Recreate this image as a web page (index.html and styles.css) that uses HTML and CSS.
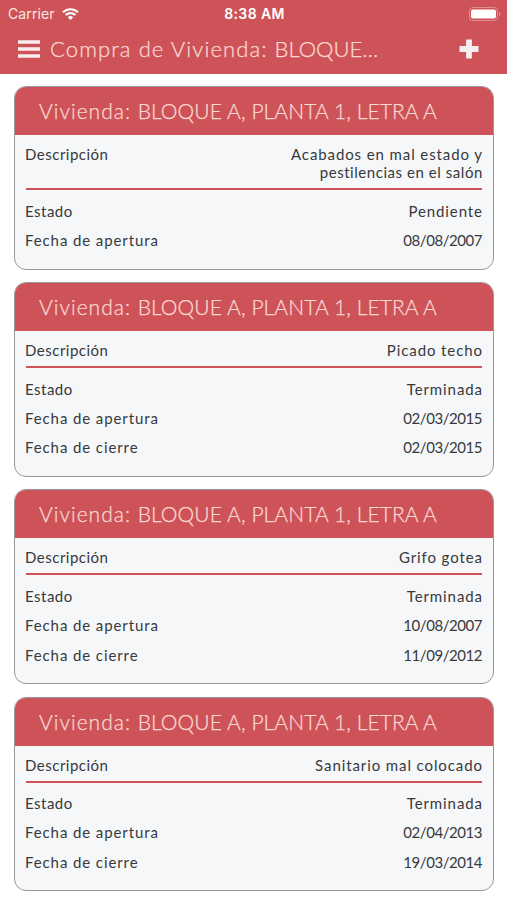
FILE: index.html
```
<!DOCTYPE html>
<html lang="es">
<head>
    <meta charset="UTF-8">
    <meta name="viewport" content="width=device-width, initial-scale=1.0">
    <title>Compra de Vivienda</title>
    <link rel="stylesheet" href="styles.css">
</head>
<body>
    <header class="top">
        <div class="status">
            <div class="carrier">
                <span>Carrier</span>
                <svg class="wifi" viewBox="0 0 17 12" width="17" height="12">
                    <path d="M1 4.3a10.8 10.8 0 0 1 15 0" fill="none" stroke="#fff" stroke-width="2.2"/>
                    <path d="M3.6 7.1a7 7 0 0 1 9.8 0" fill="none" stroke="#fff" stroke-width="2.1"/>
                    <path d="M5.8 9.2a3.9 3.9 0 0 1 5.4 0L8.5 12z" fill="#fff"/>
                </svg>
            </div>
            <span class="time">8:38 AM</span>
            <svg class="battery" viewBox="0 0 32 14" width="32" height="14">
                <rect x="0.5" y="0.5" width="28" height="13" rx="3.5" fill="none" stroke="#e08d91"/>
                <rect x="2" y="2.5" width="25" height="9" rx="2" fill="#fff"/>
                <path d="M30 5v4c1-.4 1.500-1.100 1.500-2S31 5.400 30 5z" fill="#e08d91"/>
            </svg>
        </div>
        <div class="navbar">
            <svg class="menu" viewBox="0 0 22 18" width="22" height="18">
                <path d="M0 2h22M0 9h22M0 16h22" stroke="#f7eeee" stroke-width="3.600"/>
            </svg>
            <h1>Compra de Vivienda: <span class="code">BLOQUE…</span></h1>
            <svg class="add" viewBox="0 0 20 20" width="20" height="20">
                <path d="M10 .5v19M.5 10h19" stroke="#f3eeef" stroke-width="5.800"/>
            </svg>
        </div>
    </header>
    <main class="list">
        <section class="card">
            <h2>Vivienda: <span class="code">BLOQUE A, PLANTA 1, LETRA A</span></h2>
            <div class="card-body">
                <div class="row desc"><span>Descripción</span><span class="value">Acabados en mal estado y<br><span class="tight">pestilencias en el salón</span></span></div>
                <div class="row"><span>Estado</span><span class="value">Pendiente</span></div>
                <div class="row"><span class="wide">Fecha de apertura</span><span class="value date">08/08/2007</span></div>
            </div>
        </section>
        <section class="card">
            <h2>Vivienda: <span class="code">BLOQUE A, PLANTA 1, LETRA A</span></h2>
            <div class="card-body">
                <div class="row desc"><span>Descripción</span><span class="value">Picado techo</span></div>
                <div class="row"><span>Estado</span><span class="value">Terminada</span></div>
                <div class="row"><span class="wide">Fecha de apertura</span><span class="value date">02/03/2015</span></div>
                <div class="row"><span class="wide">Fecha de cierre</span><span class="value date">02/03/2015</span></div>
            </div>
        </section>
        <section class="card">
            <h2>Vivienda: <span class="code">BLOQUE A, PLANTA 1, LETRA A</span></h2>
            <div class="card-body">
                <div class="row desc"><span>Descripción</span><span class="value">Grifo gotea</span></div>
                <div class="row"><span>Estado</span><span class="value">Terminada</span></div>
                <div class="row"><span class="wide">Fecha de apertura</span><span class="value date">10/08/2007</span></div>
                <div class="row"><span class="wide">Fecha de cierre</span><span class="value date">11/09/2012</span></div>
            </div>
        </section>
        <section class="card">
            <h2>Vivienda: <span class="code">BLOQUE A, PLANTA 1, LETRA A</span></h2>
            <div class="card-body">
                <div class="row desc"><span>Descripción</span><span class="value">Sanitario mal colocado</span></div>
                <div class="row"><span>Estado</span><span class="value">Terminada</span></div>
                <div class="row"><span class="wide">Fecha de apertura</span><span class="value date">02/04/2013</span></div>
                <div class="row"><span class="wide">Fecha de cierre</span><span class="value date">19/03/2014</span></div>
            </div>
        </section>
    </main>
</body>
</html>
```
FILE: styles.css
```
* {
    box-sizing: border-box;
}
body {
    margin: 0;
    background-color: #fff;
    color: #38393c;
    font-family: Lato, "Open Sans", sans-serif;
}
h1, h2 {
    margin: 0;
    color: #fbd9d3;
    font-weight: 300;
    white-space: nowrap;
    -webkit-text-stroke: 0.25px #fbd9d3;
}
.top {
    height: 74px;
    background-color: #cd5359;
}
.status {
    display: grid;
    grid-template-columns: 1fr auto 1fr;
    align-items: center;
    height: 27px;
    padding: 0 6px 0 8px;
    color: #fff;
    font-family: Inter, sans-serif;
    font-size: 14px;
}
.carrier {
    display: flex;
    align-items: center;
    gap: 7px;
    color: #fbe6e6;
    letter-spacing: 0.1px;
}
.time {
    font-weight: 600;
    letter-spacing: 0.4px;
}
.battery {
    justify-self: end;
}
.navbar {
    display: flex;
    align-items: center;
    height: 44px;
    padding: 0 28px 0 18px;
}
.navbar h1 {
    flex: 1;
    margin: -2px 0 0 10px;
    font-size: 22px;
    letter-spacing: 1.1px;
}
.navbar .code {
    letter-spacing: 0;
}
.list {
    display: flex;
    flex-direction: column;
    gap: 12.5px;
    padding: 12.3px 13px 0 14px;
}
.card {
    overflow: hidden;
    border: 1px solid #97999c;
    border-radius: 12px;
    background-color: #f5f7f9;
}
.card h2 {
    height: 48px;
    padding-left: 24px;
    background-color: #cd5359;
    font-size: 21px;
    line-height: 47px;
    letter-spacing: 1px;
}
.card .code {
    letter-spacing: 0.1px;
}
.card-body {
    display: flex;
    flex-direction: column;
    gap: 11.4px;
    padding: 10px 11px 19.6px 10px;
    font-size: 15px;
    line-height: 18px;
    letter-spacing: 0.5px;
}
.row {
    display: flex;
    justify-content: space-between;
}
.desc {
    margin-left: 1px;
    padding-bottom: 7px;
    border-bottom: 2px solid #cd5359;
}
.desc span:first-child {
    margin-left: -1px;
}
.wide {
    letter-spacing: 0.9px;
}
.value {
    margin-right: -0.9px;
    text-align: right;
    letter-spacing: 0.9px;
}
.tight {
    letter-spacing: 0.55px;
}
.date {
    margin-right: 0;
    letter-spacing: -0.45px;
}
```
